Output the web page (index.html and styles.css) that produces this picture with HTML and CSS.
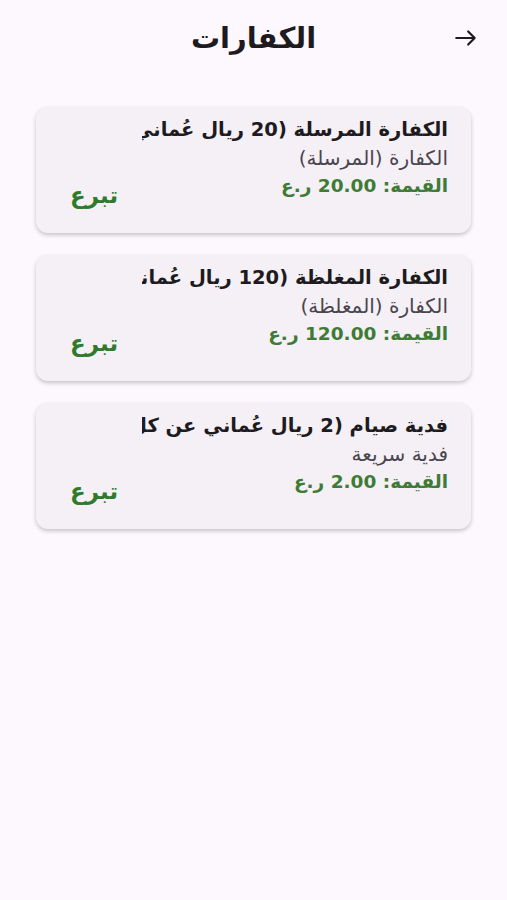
FILE: index.html
```html
<!DOCTYPE html>
<html lang="ar" dir="rtl">
<head>
    <meta charset="UTF-8">
    <title>الكفارات</title>
    <link rel="stylesheet" href="styles.css">
</head>
<body>
  <div class="app-bar">
    <button class="back" aria-label="رجوع">
      <svg width="26" height="26" viewBox="0 0 24 24"><path d="M3 12h17M14 6l6 6-6 6" fill="none" stroke="#1d1b20" stroke-width="2" stroke-linecap="round" stroke-linejoin="round"/></svg>
    </button>
    <h1 class="title">الكفارات</h1>
  </div>

  <div class="list">
    <div class="card">
      <div class="info">
        <div class="name">الكفارة المرسلة (20 ريال عُماني)</div>
        <div class="kind">الكفارة (المرسلة)</div>
        <div class="price">القيمة: 20.00 ر.ع</div>
      </div>
      <button class="donate">تبرع</button>
    </div>

    <div class="card">
      <div class="info">
        <div class="name">الكفارة المغلظة (120 ريال عُماني)</div>
        <div class="kind">الكفارة (المغلظة)</div>
        <div class="price">القيمة: 120.00 ر.ع</div>
      </div>
      <button class="donate">تبرع</button>
    </div>

    <div class="card">
      <div class="info">
        <div class="name">فدية صيام (2 ريال عُماني عن كل يوم)</div>
        <div class="kind">فدية سريعة</div>
        <div class="price">القيمة: 2.00 ر.ع</div>
      </div>
      <button class="donate">تبرع</button>
    </div>
  </div>
</body>
</html>
```
FILE: styles.css
```css
html, body{
    margin: 0;
    height: 100%;
}
body{
    background-color: #fdf8fd;
    font-family: "DejaVu Sans", sans-serif;
    color: #1d1b20;
}
.app-bar{
    position: relative;
    height: 76px;
    display: flex;
    align-items: center;
    justify-content: center;
}
.back{
    position: absolute;
    right: 27px;
    top: 24px;
    width: 28px;
    height: 28px;
    padding: 0;
    border: none;
    background: none;
    display: flex;
    align-items: center;
    justify-content: center;
}
.title{
    margin: 0;
    font-size: 29px;
    font-weight: bold;
}
.list{
    padding: 31px 36px 0 36px;
    display: flex;
    flex-direction: column;
    gap: 22px;
}
.card{
    background-color: #f4f0f5;
    border-radius: 12px;
    box-shadow: 0 2px 4px rgba(0, 0, 0, 0.22);
    display: flex;
    padding: 9px 23px 18px 12px;
    gap: 2px;
}
.info{
    flex: 1;
    min-width: 0;
    padding-bottom: 15px;
}
.info div{
    height: 28px;
    line-height: 28px;
    white-space: nowrap;
    overflow: hidden;
}
.name{
    font-size: 19.5px;
    font-weight: bold;
}
.kind{
    font-size: 20px;
    color: #49454f;
}
.price{
    font-size: 18.5px;
    font-weight: bold;
    color: #3e7b36;
}
.donate{
    align-self: flex-end;
    height: 40px;
    padding: 0 22px;
    border: none;
    background: none;
    font-family: "DejaVu Sans", sans-serif;
    font-size: 23px;
    font-weight: bold;
    color: #2f7a2c;
}
```
